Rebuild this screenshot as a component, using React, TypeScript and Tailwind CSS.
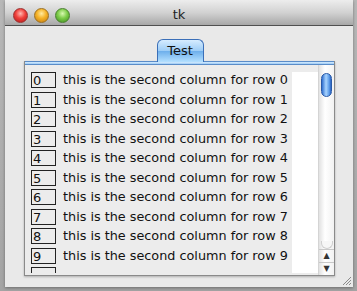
import React from "react";

const rows = Array.from({ length: 10 }, (_, i) => i);

export default function App() {
  return (
    <div className="w-[357px] h-[291px] relative overflow-hidden" style={{ fontFamily: '"DejaVu Sans", sans-serif', background: "linear-gradient(#b8b8b8, #a4a4a4)" }}>
      <div className="absolute left-[5px] top-0 w-[348px] h-[287px] flex flex-col bg-[#e8e8e8] shadow-[0_1px_3px_rgba(0,0,0,0.35)]">
        {/* title bar */}
        <div className="h-[26px] shrink-0 relative flex items-center justify-center pt-[4px] bg-gradient-to-b from-[#ededed] via-[#d2d2d2] to-[#a8a8a8] border-b border-[#505050]">
          <div className="absolute left-[8px] top-[8px] flex gap-[6px]">
            <div className="w-[15px] h-[15px] rounded-full border border-[#9c3030]" style={{ background: "radial-gradient(circle at 50% 35%, #ffb8b0 0%, #f0403a 45%, #b01818 100%)" }} />
            <div className="w-[15px] h-[15px] rounded-full border border-[#9c7020]" style={{ background: "radial-gradient(circle at 50% 35%, #ffeaa0 0%, #f5b226 45%, #c07810 100%)" }} />
            <div className="w-[15px] h-[15px] rounded-full border border-[#4a8030]" style={{ background: "radial-gradient(circle at 50% 35%, #d8f8b0 0%, #7ccc48 45%, #3c8a1c 100%)" }} />
          </div>
          <span className="text-[13px] text-[#222]">tk</span>
        </div>
        {/* body */}
        <div className="flex-1 relative bg-[#e9e9e9] pt-[13px] px-[19px]">
          <div className="flex justify-center h-[23px] -mb-[1px] relative z-10">
            <div className="ml-[2px] w-[47px] h-[23px] rounded-t-[6px] border border-b-0 border-[#3b6fb8] flex items-center justify-center text-[13px] text-[#111]" style={{ background: "linear-gradient(#d6ecff 0%, #9cccf6 50%, #6fb0ec 52%, #b4e0ff 100%)" }}>
              Test
            </div>
          </div>
          <div className="w-[311px] h-[215px] border border-[#8a8a8a] border-t-0 bg-[#ececec] flex flex-col shadow-[0_1px_2px_rgba(0,0,0,0.25)]">
            <div className="h-[4px] shrink-0 border-t border-b border-[#5a8cc8]" style={{ background: "linear-gradient(#d6ecff, #9ccbf4)" }} />
            <div className="flex-1 flex overflow-hidden pl-[2px]">
              <div className="flex-1 flex overflow-hidden pt-[7px] pb-[2px]">
                <div className="flex-1 flex overflow-hidden bg-white">
                  <div className="w-[265px] bg-[#ececec] flex flex-col">
                    {rows.map((i) => (
                      <div key={i} className="h-[19.5px] shrink-0 flex items-start pl-[4px]">
                        <div className="w-[25px] h-[16px] border border-[#222] bg-[#ececec] text-[13px] leading-[15px] pl-[1px] text-[#111]">{i}</div>
                        <div className="ml-[7px] text-[12.8px] leading-[16px] text-[#111] whitespace-nowrap">this is the second column for row {i}</div>
                      </div>
                    ))}
                    <div className="h-[19.5px] shrink-0 flex items-start pl-[4px]">
                      <div className="w-[25px] h-[16px] border border-[#222] bg-[#ececec]" />
                    </div>
                  </div>
                </div>
              </div>
              <div className="w-[16px] shrink-0 flex flex-col border-l border-[#d4d4d4]" style={{ background: "linear-gradient(90deg, #e2e2e2, #ffffff 40%, #f2f2f2)" }}>
                <div className="mx-auto mt-[8px] w-[11px] h-[24px] rounded-full border border-[#2a5aa8]" style={{ background: "linear-gradient(90deg, #2f6fd0, #a8d4ff 45%, #5a9ae8 80%, #2a62c0)" }} />
                <div className="flex-1" />
                <div className="mx-auto w-[12px] h-[8px] rounded-b-full border-b border-x border-[#cfcfcf] bg-[#f6f6f6]" />
                <div className="h-[24px] mb-[2px] border-t border-[#c8c8c8] flex flex-col items-center text-[8px] text-[#333]">
                  <div className="h-[12px] flex items-center">▲</div>
                  <div className="w-full border-t border-[#c8c8c8] h-[12px] flex items-center justify-center">▼</div>
                </div>
              </div>
            </div>
          </div>
          <svg className="absolute right-[1px] bottom-[1px]" width="11" height="11" viewBox="0 0 11 11">
            <path d="M10 2 L2 10 M10 5 L5 10 M10 8 L8 10" stroke="#8a8a8a" strokeWidth="1" />
          </svg>
        </div>
      </div>
    </div>
  );
}
